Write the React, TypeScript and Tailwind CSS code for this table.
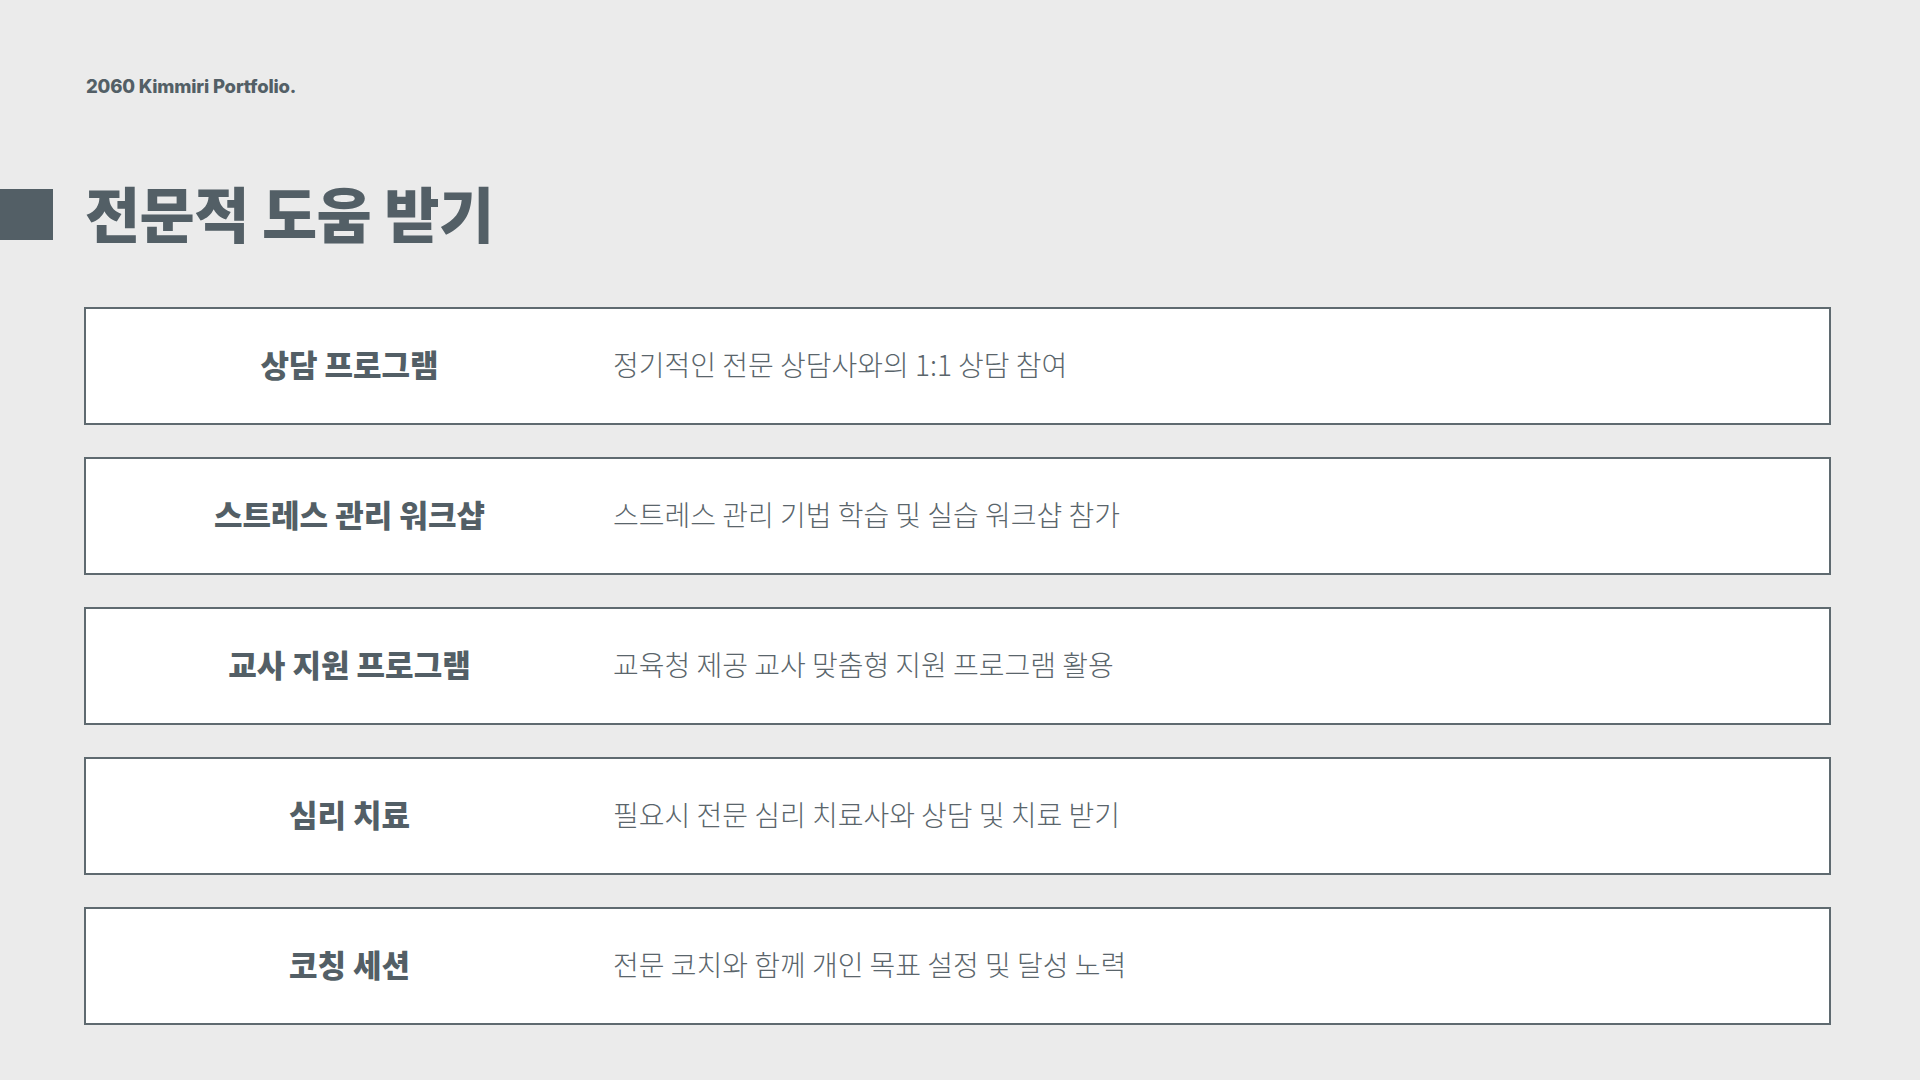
const items = [
  { title: '상담 프로그램', desc: '정기적인 전문 상담사와의 1:1 상담 참여' },
  { title: '스트레스 관리 워크샵', desc: '스트레스 관리 기법 학습 및 실습 워크샵 참가' },
  { title: '교사 지원 프로그램', desc: '교육청 제공 교사 맞춤형 지원 프로그램 활용' },
  { title: '심리 치료', desc: '필요시 전문 심리 치료사와 상담 및 치료 받기' },
  { title: '코칭 세션', desc: '전문 코치와 함께 개인 목표 설정 및 달성 노력' },
]

export default function App() {
  return (
    <div className="w-[1920px] h-[1080px] overflow-hidden bg-[#ebebeb] text-[#535f66] font-['Inter','Noto_Sans_CJK_KR',sans-serif]">
      <div className="pl-[86px] pt-[74px] h-[98px]">
        <p className="text-[18.5px] leading-[24px] font-extrabold tracking-[-0.01em]">2060 Kimmiri Portfolio.</p>
      </div>

      <div className="mt-[91px] h-[51px] flex items-center gap-[32px]">
        <div className="w-[53px] h-[51px] bg-[#535f66] shrink-0" />
        <h1 className="text-[60px] leading-none font-black tracking-[-0.01em] pb-[6px] font-['Noto_Sans_CJK_KR',sans-serif]">
          전문적 도움 받기
        </h1>
      </div>

      <div className="mt-[67px] ml-[84px] w-[1747px] flex flex-col gap-[32px]">
        {items.map(item => (
          <div
            key={item.title}
            className="h-[118px] bg-white border-2 border-[#5f6a70] flex items-center font-['Noto_Sans_CJK_KR',sans-serif]"
          >
            <p className="w-[527px] shrink-0 text-center text-[31px] font-black pb-[4px]">{item.title}</p>
            <p className="text-[28px] font-light text-[#5a656b] pb-[4px]">{item.desc}</p>
          </div>
        ))}
      </div>
    </div>
  )
}
